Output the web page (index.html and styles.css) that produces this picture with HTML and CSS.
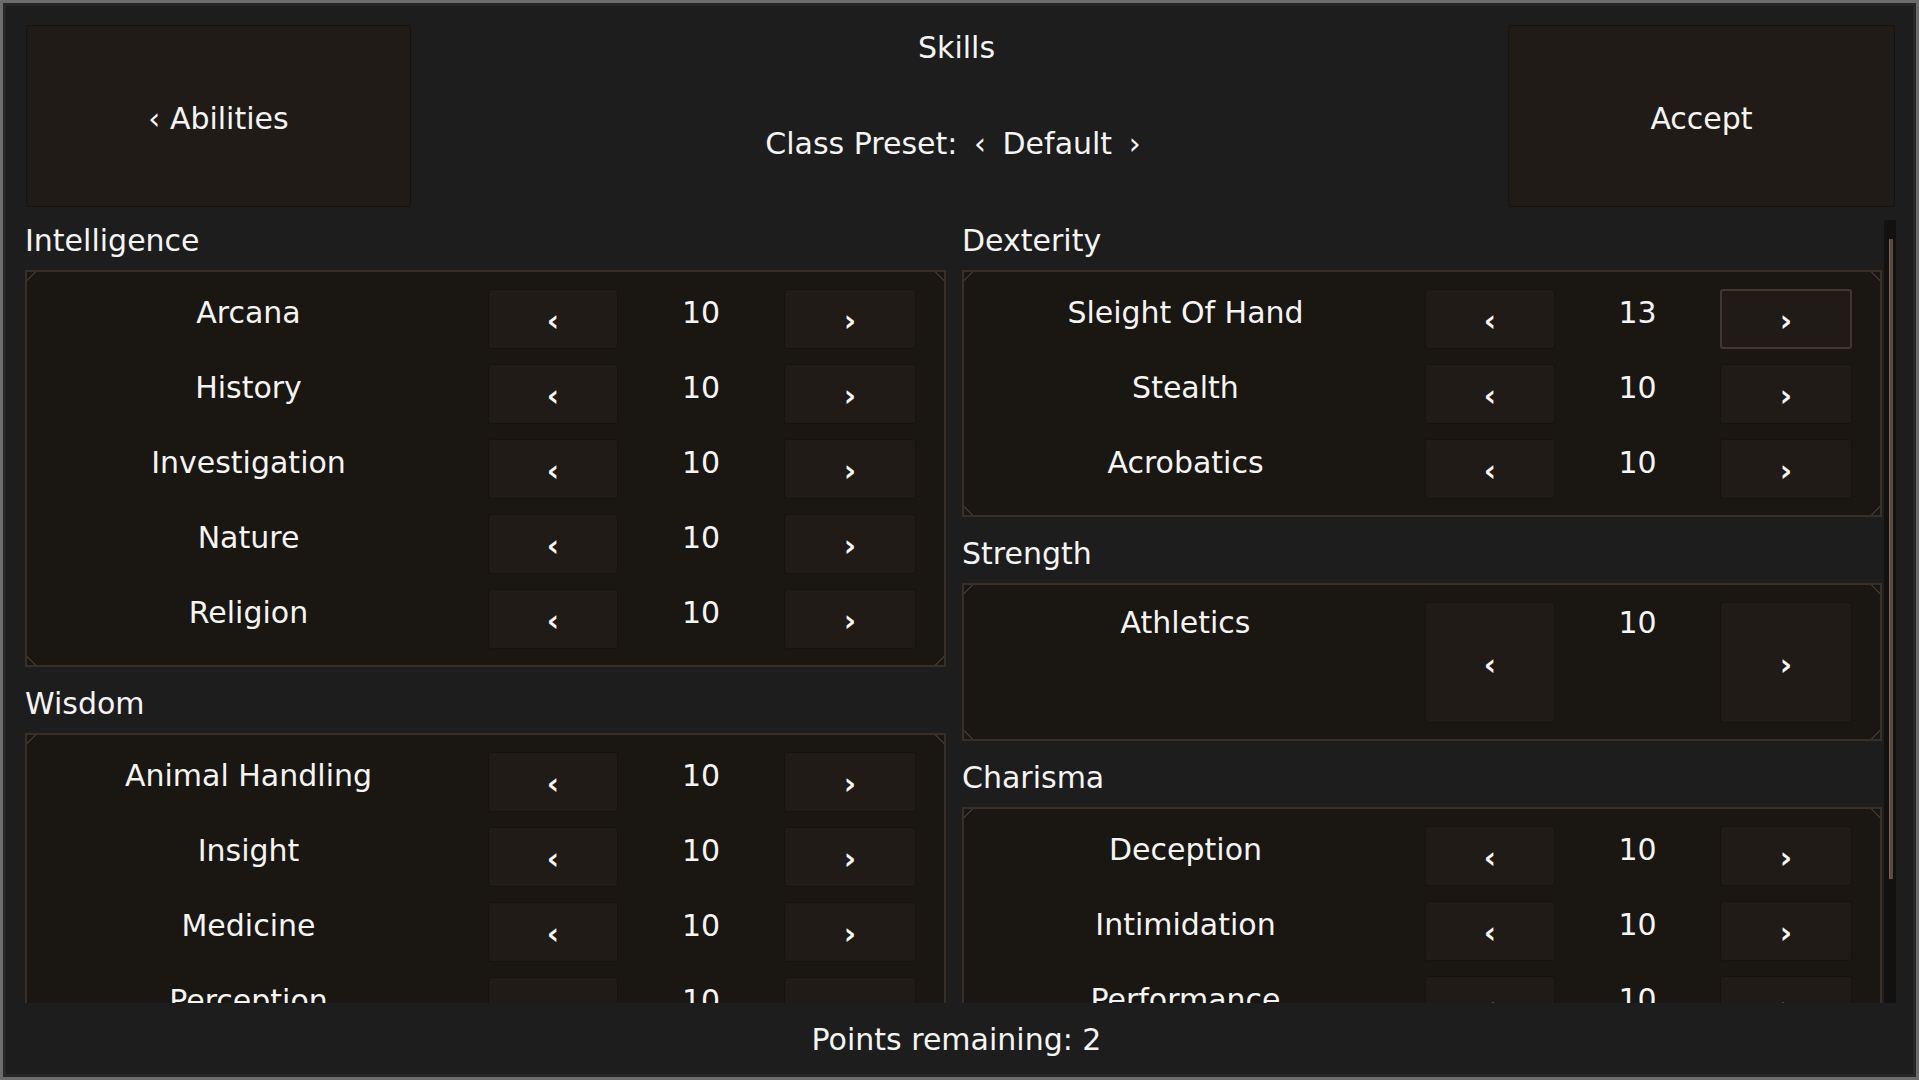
FILE: index.html
```html
<!DOCTYPE html>
<html lang="en">
<head>
<meta charset="utf-8">
<title>Skills</title>
<link rel="stylesheet" href="styles.css">
</head>
<body>
<div class="window">
  <header class="top">
    <div class="hbtn">‹ Abilities</div>
    <div class="title">
      <div class="skills">Skills</div>
      <div class="preset">Class Preset: <span class="ch">‹</span> Default <span class="ch">›</span></div>
    </div>
    <div class="hbtn">Accept</div>
  </header>

  <main class="content">
    <div class="col">
      <section class="group">
        <h2>Intelligence</h2>
        <div class="panel">
          <div class="row"><span class="label">Arcana</span><span class="btn">‹</span><span class="val">10</span><span class="btn">›</span></div>
          <div class="row"><span class="label">History</span><span class="btn">‹</span><span class="val">10</span><span class="btn">›</span></div>
          <div class="row"><span class="label">Investigation</span><span class="btn">‹</span><span class="val">10</span><span class="btn">›</span></div>
          <div class="row"><span class="label">Nature</span><span class="btn">‹</span><span class="val">10</span><span class="btn">›</span></div>
          <div class="row"><span class="label">Religion</span><span class="btn">‹</span><span class="val">10</span><span class="btn">›</span></div>
        </div>
      </section>
      <section class="group">
        <h2>Wisdom</h2>
        <div class="panel">
          <div class="row"><span class="label">Animal Handling</span><span class="btn">‹</span><span class="val">10</span><span class="btn">›</span></div>
          <div class="row"><span class="label">Insight</span><span class="btn">‹</span><span class="val">10</span><span class="btn">›</span></div>
          <div class="row"><span class="label">Medicine</span><span class="btn">‹</span><span class="val">10</span><span class="btn">›</span></div>
          <div class="row"><span class="label">Perception</span><span class="btn">‹</span><span class="val">10</span><span class="btn">›</span></div>
        </div>
      </section>
    </div>

    <div class="col">
      <section class="group">
        <h2>Dexterity</h2>
        <div class="panel">
          <div class="row"><span class="label">Sleight Of Hand</span><span class="btn">‹</span><span class="val">13</span><span class="btn hover">›</span></div>
          <div class="row"><span class="label">Stealth</span><span class="btn">‹</span><span class="val">10</span><span class="btn">›</span></div>
          <div class="row"><span class="label">Acrobatics</span><span class="btn">‹</span><span class="val">10</span><span class="btn">›</span></div>
        </div>
      </section>
      <section class="group">
        <h2>Strength</h2>
        <div class="panel">
          <div class="row tall"><span class="label">Athletics</span><span class="btn">‹</span><span class="val">10</span><span class="btn">›</span></div>
        </div>
      </section>
      <section class="group">
        <h2>Charisma</h2>
        <div class="panel">
          <div class="row"><span class="label">Deception</span><span class="btn">‹</span><span class="val">10</span><span class="btn">›</span></div>
          <div class="row"><span class="label">Intimidation</span><span class="btn">‹</span><span class="val">10</span><span class="btn">›</span></div>
          <div class="row"><span class="label">Performance</span><span class="btn">‹</span><span class="val">10</span><span class="btn">›</span></div>
        </div>
      </section>
    </div>

    <div class="scrollbar"><div class="thumb"></div></div>
  </main>

  <footer class="footer">Points remaining: 2</footer>
</div>
</body>
</html>
```

FILE: styles.css
```css
* { box-sizing: border-box; }

html, body {
  margin: 0;
  padding: 0;
  background: #1d1d1d;
}

body {
  font-family: "DejaVu Sans", "Liberation Sans", sans-serif;
  font-size: 30px;
  line-height: 36px;
  color: #f4f4f4;
}

.window {
  width: 1919px;
  height: 1080px;
  display: flex;
  flex-direction: column;
  background: #1d1d1d;
  border: 3px solid #6c6c6c;
  padding: 3px 3px 5px 3px;
  box-shadow: inset 0 0 0 3px #262626;
}

/* ---------- header ---------- */
.top {
  height: 209px;
  flex: none;
  display: grid;
  grid-template-columns: 385px 1fr 387px;
  padding: 19px 18px 0 20px;
}

.hbtn {
  height: 182px;
  background: #201b16;
  border: 1px solid #17130f;
  border-radius: 3px;
  display: flex;
  align-items: center;
  justify-content: center;
  padding-top: 5px;
  white-space: nowrap;
}

.title {
  display: flex;
  flex-direction: column;
  align-items: center;
  padding-top: 5px;
  padding-right: 6px;
}

.preset {
  margin-top: 60px;
  white-space: nowrap;
}

.ch { margin: 0 7px; }

/* ---------- content ---------- */
.content {
  height: 788px;
  flex: none;
  display: flex;
  align-items: flex-start;
  padding: 0 17px 0 19px;
  overflow: hidden;
}

.col {
  flex: none;
  width: 921px;
  padding-top: 8px;
}

.col + .col {
  width: 920px;
  margin-left: 16px;
}

.group h2 {
  margin: 19px 0 11px 0;
  font-size: 30px;
  line-height: 36px;
  font-weight: normal;
  white-space: nowrap;
}

.group:first-child h2 { margin-top: 0; }

.panel {
  position: relative;
  background: #1a1612;
  border: 2px solid #3a2f26;
  padding: 17px 28px 16px 0;
  display: flex;
  flex-direction: column;
  gap: 15px;
}

.panel::before {
  content: "";
  position: absolute;
  inset: 0;
  pointer-events: none;
  background:
    linear-gradient(135deg, transparent 0 40%, #3f342b 40% 55%, transparent 55%) left top / 9px 9px no-repeat,
    linear-gradient(225deg, transparent 0 40%, #3f342b 40% 55%, transparent 55%) right top / 9px 9px no-repeat,
    linear-gradient(45deg, transparent 0 40%, #3f342b 40% 55%, transparent 55%) left bottom / 9px 9px no-repeat,
    linear-gradient(315deg, transparent 0 40%, #3f342b 40% 55%, transparent 55%) right bottom / 9px 9px no-repeat;
}

.row {
  height: 60px;
  flex: none;
  display: grid;
  grid-template-columns: 461px 130px 1fr 132px;
  align-items: stretch;
}

.row.tall { height: 121px; }

.label {
  text-align: center;
  padding: 6px 18px 0 0;
  white-space: nowrap;
}

.row.tall .label,
.row.tall .val { padding-top: 3px; }

.val {
  text-align: center;
  padding-top: 6px;
}

.btn {
  background: #201b16;
  border: 1px solid #16120f;
  border-radius: 3px;
  display: flex;
  align-items: center;
  justify-content: center;
  padding-top: 4px;
  font-weight: bold;
}

.btn.hover {
  border: 2px solid #42372d;
}

/* ---------- scrollbar ---------- */
.scrollbar {
  flex: none;
  width: 12px;
  height: 783px;
  margin: 5px 0 0 2px;
  background: #131110;
  border-radius: 2px;
  padding: 19px 2px 0 5px;
}

.thumb {
  width: 4px;
  height: 640px;
  background: #5e4a3c;
  border-left: 1px solid #7a6250;
}

/* ---------- footer ---------- */
.footer {
  height: 69px;
  flex: none;
  display: flex;
  align-items: center;
  justify-content: center;
  padding: 4px 6px 0 0;
  background: #1d1d1d;
}
```
